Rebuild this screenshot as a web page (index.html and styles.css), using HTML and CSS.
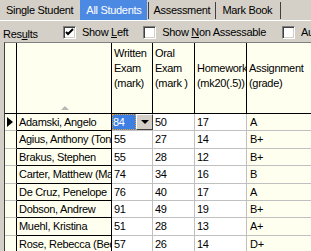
FILE: index.html
```html
<!DOCTYPE html>
<html lang="en">
<head>
    <meta charset="UTF-8">
    <title>Mark Book - All Students</title>
    <link rel="stylesheet" href="styles.css">
</head>
<body>
    <div class="tabs">
        <div class="tab tab-first">Single Student</div>
        <div class="tab tab-active">All Students</div>
        <div class="tab-sep"></div>
        <div class="tab">Assessment</div>
        <div class="tab-sep"></div>
        <div class="tab tab-last">Mark Book</div>
        <div class="tab-sep"></div>
    </div>

    <div class="options">
        <span class="results">Res<u>u</u>lts</span>
        <label class="check check-left">
            <span class="box">
                <svg width="9" height="9" viewBox="0 0 9 9"><path d="M1 4 L3 6 L8 1" fill="none" stroke="#000" stroke-width="2"/></svg>
            </span>
            <span>Show <u>L</u>eft</span>
        </label>
        <label class="check check-non">
            <span class="box"></span>
            <span>Show <u>N</u>on Assessable</span>
        </label>
        <label class="check check-auto">
            <span class="box"></span>
            <span>Auto</span>
        </label>
    </div>

    <div class="grid">
        <!-- header -->
        <div class="hd hd-ind"></div>
        <div class="hd hd-name"><span class="sort-arrow"></span></div>
        <div class="hd">Written<br>Exam<br>(mark)</div>
        <div class="hd">Oral<br>Exam<br>(mark )</div>
        <div class="hd"><br>Homework<br>(mk20(.5))</div>
        <div class="hd"><br>Assignment<br>(grade)</div>

        <!-- rows -->
        <div class="ind"><span class="current"></span></div>
        <div class="name">Adamski, Angelo</div>
        <div class="mark editing">
            <span class="edit-value">84</span>
            <span class="drop-btn"><span class="drop-arrow"></span></span>
        </div>
        <div class="mark">50</div>
        <div class="mark">17</div>
        <div class="grade">A</div>

        <div class="ind"></div>
        <div class="name">Agius, Anthony (Tony)</div>
        <div class="mark">55</div>
        <div class="mark">27</div>
        <div class="mark">14</div>
        <div class="grade">B+</div>

        <div class="ind"></div>
        <div class="name">Brakus, Stephen</div>
        <div class="mark">55</div>
        <div class="mark">28</div>
        <div class="mark">12</div>
        <div class="grade">B+</div>

        <div class="ind"></div>
        <div class="name">Carter, Matthew (Matt)</div>
        <div class="mark">74</div>
        <div class="mark">34</div>
        <div class="mark">16</div>
        <div class="grade">B</div>

        <div class="ind"></div>
        <div class="name">De Cruz, Penelope</div>
        <div class="mark">76</div>
        <div class="mark">40</div>
        <div class="mark">17</div>
        <div class="grade">A</div>

        <div class="ind"></div>
        <div class="name">Dobson, Andrew</div>
        <div class="mark">91</div>
        <div class="mark">49</div>
        <div class="mark">19</div>
        <div class="grade">B+</div>

        <div class="ind"></div>
        <div class="name">Muehl, Kristina</div>
        <div class="mark">51</div>
        <div class="mark">28</div>
        <div class="mark">13</div>
        <div class="grade">A+</div>

        <div class="ind"></div>
        <div class="name">Rose, Rebecca (Becky)</div>
        <div class="mark">57</div>
        <div class="mark">26</div>
        <div class="mark">14</div>
        <div class="grade">D+</div>
    </div>
</body>
</html>
```

FILE: styles.css
```css
body {
    margin: 0;
    width: 311px;
    height: 251px;
    overflow: hidden;
    background-color: #d4d0c8;
    color: #000;
    font-family: "Liberation Sans", Arial, sans-serif;
    font-size: 11px;
    letter-spacing: -0.3px;
}

/* tab strip */
.tabs {
    display: flex;
    height: 20px;
    border-bottom: 1px solid #fff;
    white-space: nowrap;
}
.tab {
    flex-shrink: 0;
    line-height: 20px;
    padding: 0 5px 0 4px;
}
.tab-first {
    padding: 0 7px 0 6px;
}
.tab-last {
    padding: 0 8px 0 6px;
}
.tab-active {
    padding: 0 6px;
    margin-right: 1px;
    background-color: #4c89e3;
    color: #fff;
}
.tab-sep {
    flex-shrink: 0;
    width: 1px;
    height: 17px;
    margin-top: 2px;
    background-color: #404040;
}

/* option checkboxes */
.options {
    display: flex;
    align-items: center;
    height: 21px;
    padding-top: 1px;
    box-sizing: border-box;
    white-space: nowrap;
}
.results {
    flex-shrink: 0;
    width: 60px;
    margin-left: 3px;
    padding-top: 3px;
}
.check {
    flex-shrink: 0;
    display: flex;
    align-items: center;
    gap: 6px;
}
.check-non {
    margin-left: 15px;
}
.check-auto {
    margin-left: 16px;
}
.box {
    box-sizing: border-box;
    width: 13px;
    height: 13px;
    background-color: #fff;
    border-top: 1px solid #808080;
    border-left: 1px solid #808080;
    border-right: 1px solid #fff;
    border-bottom: 1px solid #fff;
    box-shadow: inset 1px 1px 0 #404040, inset -1px -1px 0 #d4d0c8;
    display: flex;
    align-items: center;
    justify-content: center;
}

/* grid */
.grid {
    display: grid;
    grid-template-columns: 12px 95px 41px 42px 52px 65px;
    grid-template-rows: 71px;
    grid-auto-rows: 17.375px;
    margin-left: 4px;
    border-top: 1px solid #808080;
    border-left: 1px solid #404040;
}
.grid > div {
    box-sizing: border-box;
    overflow: hidden;
    white-space: nowrap;
    border-right: 1px solid #c0c0c0;
    border-bottom: 1px solid #c0c0c0;
    line-height: 16px;
    padding: 0 2px;
}
.grid > .hd {
    background-color: #fffff0;
    border-right-color: #000;
    border-bottom-color: #000;
    line-height: 15px;
    padding: 3px 0 0 2px;
}
.hd-name {
    display: flex;
    align-items: flex-end;
    justify-content: center;
}
.sort-arrow {
    width: 0;
    height: 0;
    margin-bottom: 3px;
    border-left: 4px solid transparent;
    border-right: 4px solid transparent;
    border-bottom: 4px solid #b8b8b8;
}

.grid > .ind {
    background-color: #fffff0;
    border-right-color: #000;
    padding: 0;
    display: flex;
    align-items: center;
}
.current {
    width: 0;
    height: 0;
    margin-left: 2px;
    border-top: 5px solid transparent;
    border-bottom: 5px solid transparent;
    border-left: 6px solid #000;
}
.grid > .name {
    background-color: #fffff0;
    border-right-color: #000;
    border-bottom-color: #000;
}
.grid > .mark {
    background-color: #fff;
}
.grid > .grade {
    background-color: #fffff0;
    padding-left: 3px;
}

/* cell editor with drop-down */
.grid > .editing {
    display: flex;
    padding: 0;
    overflow: visible;
}
.edit-value {
    width: 23px;
    background-color: #3d7fe3;
    color: #fff;
    padding-left: 1px;
    outline: 1px dotted #e0a030;
    outline-offset: -1px;
}
.drop-btn {
    box-sizing: border-box;
    width: 17px;
    margin-right: -1px;
    background-color: #d4d0c8;
    border-top: 1px solid #fff;
    border-left: 1px solid #fff;
    border-right: 1px solid #404040;
    border-bottom: 1px solid #404040;
    display: flex;
    align-items: center;
    justify-content: center;
}
.drop-arrow {
    width: 0;
    height: 0;
    border-left: 4px solid transparent;
    border-right: 4px solid transparent;
    border-top: 4px solid #000;
}
```
